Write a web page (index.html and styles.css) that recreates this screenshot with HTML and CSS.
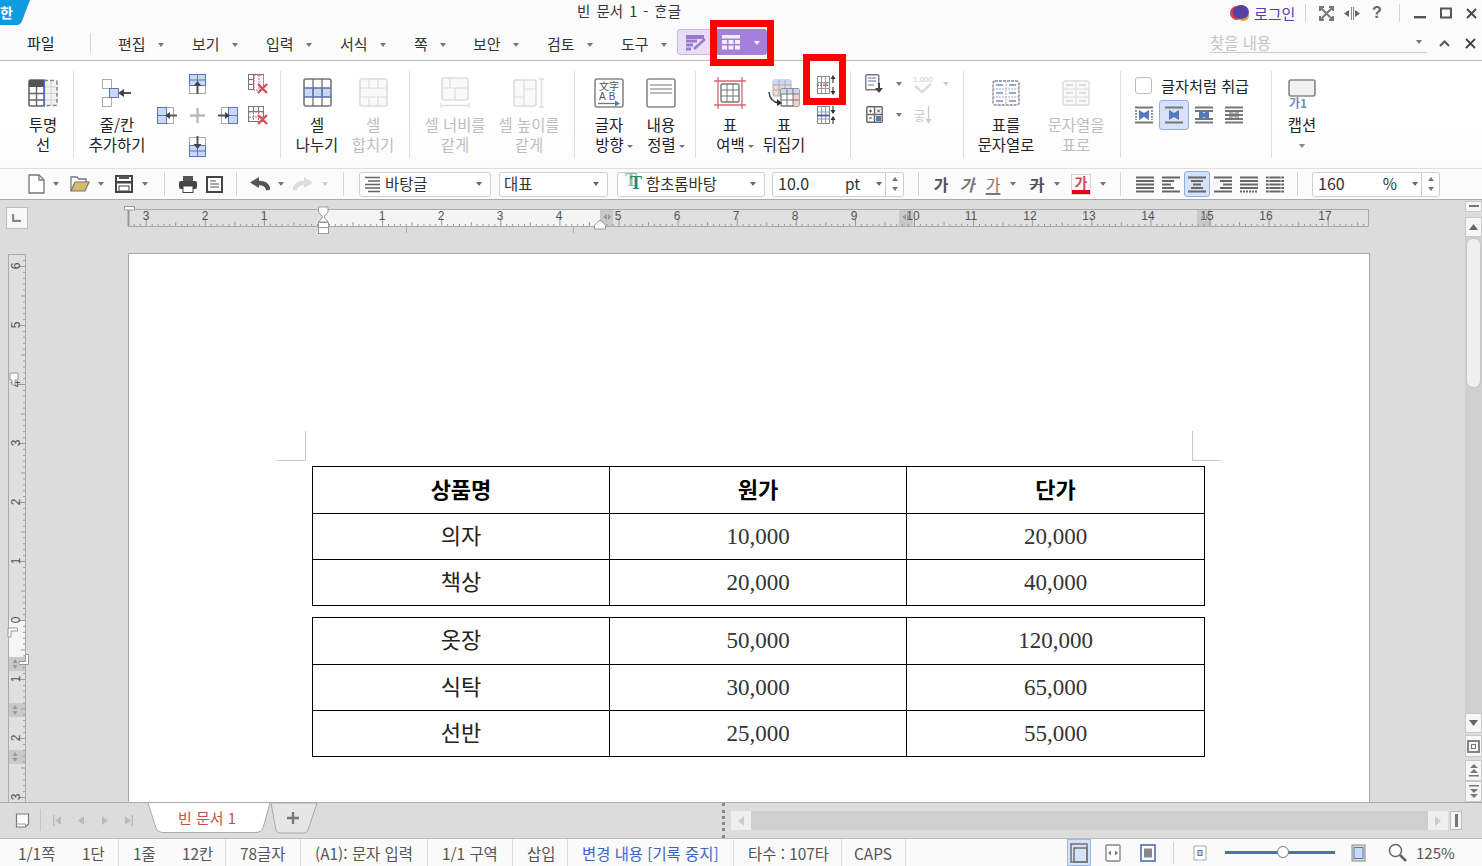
FILE: index.html
```html
<!DOCTYPE html>
<html lang="ko">
<head>
<meta charset="utf-8">
<title>빈 문서 1 - 한글</title>
<link rel="stylesheet" href="styles.css">
</head>
<body>
<div class="app">

<header class="top">
  <div class="titlebar">
    <svg class="logo" width="30" height="25" viewBox="0 0 30 25"><path d="M0 0H30L22 21Q20.500 25 17 25H0Z" fill="#0f9be0"/><text x="0" y="18" font-size="14" font-weight="700" fill="#fff" font-family="Noto Sans CJK KR">한</text></svg>
    <div class="title">빈 문서 1 - ᄒᆞᆫ글</div>
    <div class="winbtns">
      <div class="c w22"><svg width="22" height="18" viewBox="0 0 22 18"><ellipse cx="8" cy="9" rx="7" ry="7" fill="#d8394a"/><ellipse cx="14" cy="12" rx="6" ry="5" fill="#ee9a2e"/><ellipse cx="12" cy="8" rx="8" ry="7" fill="#5540a8"/></svg></div>
      <div class="login w54">로그인</div>
      <div class="vsep short"></div>
      <div class="c w40"><svg width="15" height="15" viewBox="0 0 15 15" fill="none" stroke="#777" stroke-width="2"><path d="M1 5V1H5M10 1H14V5M14 10V14H10M5 14H1V10M2 2L13 13M13 2L2 13"/></svg></div>
      <div class="c w12"><svg width="16" height="13" viewBox="0 0 16 13"><path d="M7.500 0V13M9.500 0V13" stroke="#888"/><path d="M0 6.500L5 3V10ZM16 6.500L11 3V10Z" fill="#666"/></svg></div>
      <div class="c w38 qmark">?</div>
      <div class="c w6"><div class="vsep short"></div></div>
      <div class="c w36"><svg width="12" height="12" viewBox="0 0 12 12"><rect y="9" width="12" height="2.400" fill="#555"/></svg></div>
      <div class="c w16"><svg width="12" height="12" viewBox="0 0 12 12" fill="none" stroke="#555"><rect x="1" y="1.500" width="10" height="9" stroke-width="2"/></svg></div>
      <div class="c w28 closecell"><svg width="11" height="11" viewBox="0 0 11 11" stroke="#444" stroke-width="1.800"><path d="M1 1L10 10M10 1L1 10"/></svg></div>
    </div>
  </div>
  <nav class="menubar">
    <div class="file">파일</div>
    <div class="m w74">편집<i class="dd"></i></div>
    <div class="m w74">보기<i class="dd"></i></div>
    <div class="m w74">입력<i class="dd"></i></div>
    <div class="m w74">서식<i class="dd"></i></div>
    <div class="m w59">쪽<i class="dd"></i></div>
    <div class="m w74">보안<i class="dd"></i></div>
    <div class="m w74">검토<i class="dd"></i></div>
    <div class="m w56">도구<i class="dd"></i></div>
    <div class="ctx">
      <div class="ctx-a"><svg width="22" height="18" viewBox="0 0 22 18"><rect x="1" y="2" width="18" height="4" fill="#9a78cf"/><path d="M1 8H12M1 12H8M1 16H6" stroke="#9a78cf" stroke-width="3"/><path d="M9 16L20 6" stroke="#9a78cf" stroke-width="2.500"/></svg></div>
      <div class="ctx-b"><svg width="18" height="15" viewBox="0 0 18 15"><rect width="18" height="3.500" fill="#f3ecfb"/><g fill="#f3ecfb"><rect y="5" width="5" height="4"/><rect x="6.500" y="5" width="5" height="4"/><rect x="13" y="5" width="5" height="4"/><rect y="10.500" width="5" height="4"/><rect x="6.500" y="10.500" width="5" height="4"/><rect x="13" y="10.500" width="5" height="4"/></g></svg><i class="dd white"></i></div>
    </div>
    <div class="find"><span>찾을 내용</span><i class="dd"></i></div>
    <div class="c w34"><svg width="11" height="7" viewBox="0 0 11 7" fill="none" stroke="#555" stroke-width="2"><path d="M1 6L5.500 1.500L10 6"/></svg></div>
    <div class="c w18"><svg width="11" height="11" viewBox="0 0 11 11" stroke="#444" stroke-width="1.800"><path d="M1 1L10 10M10 1L1 10"/></svg></div>
  </nav>
</header>

<section class="ribbon">
  <div class="grp g1">
    <div class="btn w60"><div class="ic"><svg width="30" height="28" viewBox="0 0 30 28"><rect x="1" y="1" width="15" height="26" rx="1.500" fill="#fff" stroke="#666" stroke-width="1.600"/><rect x="1" y="1" width="15" height="7" fill="#555"/><path d="M8.500 8V27M1 14.500H16M1 21H16" stroke="#666" stroke-width="1.400"/><path d="M16 1.500H27Q29 1.500 29 3.500V24.500Q29 26.500 27 26.500H16" fill="#f4f4f4" stroke="#888" stroke-width="1.600" stroke-dasharray="4 2"/><path d="M23 2V26M17 8H28M17 14.500H28M17 21H28" stroke="#ccc"/><path d="M16.500 0V28" stroke="#5577bb" stroke-width="1.200"/></svg></div><div class="lb">투명<br>선</div></div>
  </div>
  <div class="grp g2">
    <div class="btn w68"><div class="ic"><svg width="30" height="28" viewBox="0 0 30 28"><rect x=".5" y=".5" width="9" height="9" fill="#fff" stroke="#aaa"/><rect x=".5" y="18.500" width="9" height="9" fill="#fff" stroke="#aaa"/><rect x="7.500" y="9.500" width="9" height="9" fill="#c9d8f5" stroke="#5577bb"/><path d="M18 14H29" stroke="#555" stroke-width="2"/><path d="M16 14L22 10V18Z" fill="#444"/></svg></div><div class="lb">줄/칸<br>추가하기</div></div>
    <div class="mini">
      <div class="c w31"></div>
      <div class="c w31"><svg width="18" height="21" viewBox="0 0 18 21"><rect x=".5" y="11.500" width="16" height="8" fill="#fff" stroke="#aaa"/><rect x=".5" y=".5" width="16" height="11" fill="#c9d8f5" stroke="#5577bb"/><path d="M8.500 0V11M0 6H17" stroke="#5577bb"/><path d="M8.500 20V11" stroke="#555" stroke-width="2"/><path d="M8.500 7L12.500 12H4.500Z" fill="#444"/></svg></div>
      <div class="c w30"></div>
      <div class="c w30"><svg width="21" height="21" viewBox="0 0 21 21"><rect x=".5" y=".5" width="15" height="15" fill="#fff" stroke="#777"/><path d="M5.500 1V15M0 5.500H5M0 10.500H5" stroke="#777"/><rect x="6" y="1" width="9.500" height="15" fill="#fff" stroke="#cf5a6a" stroke-dasharray="2 1"/><path d="M11 1V15" stroke="#cf5a6a" stroke-dasharray="2 1"/><path d="M10 10L19 19M19 10L10 19" stroke="#d9505f" stroke-width="2.400"/></svg></div>

      <div class="c w31"><svg width="20" height="17" viewBox="0 0 20 17"><rect x=".5" y=".5" width="16" height="16" fill="#fff" stroke="#aaa"/><rect x=".5" y=".5" width="9" height="16" fill="#c9d8f5" stroke="#5577bb"/><path d="M0 8.500H10" stroke="#5577bb"/><path d="M11 8.500H20" stroke="#555" stroke-width="2"/><path d="M8 8.500L13 5V12Z" fill="#444"/></svg></div>
      <div class="c w31"><svg width="15" height="15" viewBox="0 0 15 15"><path d="M7.500 0V15M0 7.500H15" stroke="#bbb" stroke-width="2.400"/></svg></div>
      <div class="c w30"><svg width="20" height="17" viewBox="0 0 20 17"><rect x="3.500" y=".5" width="16" height="16" fill="#fff" stroke="#aaa"/><rect x="10.500" y=".5" width="9" height="16" fill="#c9d8f5" stroke="#5577bb"/><path d="M10 8.500H20" stroke="#5577bb"/><path d="M0 8.500H9" stroke="#555" stroke-width="2"/><path d="M12 8.500L7 5V12Z" fill="#444"/></svg></div>
      <div class="c w30"><svg width="21" height="20" viewBox="0 0 21 20"><rect x=".5" y=".5" width="15" height="15" fill="#fff" stroke="#777"/><path d="M5.500 0V5M10.500 0V5M0 5.500H15" stroke="#777"/><path d="M1 6H15M1 11H15M5.500 6V15M10.500 6V15" stroke="#cf5a6a" stroke-dasharray="2 1"/><path d="M10 9L19 18M19 9L10 18" stroke="#d9505f" stroke-width="2.400"/></svg></div>

      <div class="c w31"></div>
      <div class="c w31"><svg width="18" height="21" viewBox="0 0 18 21"><rect x=".5" y="1.500" width="16" height="9" fill="#fff" stroke="#aaa"/><rect x=".5" y="9.500" width="16" height="11" fill="#c9d8f5" stroke="#5577bb"/><path d="M8.500 9V21M0 15H17" stroke="#5577bb"/><path d="M8.500 0V9" stroke="#555" stroke-width="2"/><path d="M8.500 13L12.500 8H4.500Z" fill="#444"/></svg></div>
    </div>
  </div>
  <div class="grp g3">
    <div class="btn w56"><div class="ic"><svg width="29" height="29" viewBox="0 0 29 29"><rect x="1" y="10" width="27" height="9" fill="#c9d8f5"/><rect x="1" y="1" width="27" height="27" rx="2" fill="none" stroke="#777" stroke-width="1.600"/><path d="M10 1V28M19 1V28M1 10H28M1 19H28" stroke="#666" stroke-width="1.200"/><path d="M1 10H28M1 19H28M10 10V19M19 10V19" stroke="#5577bb" stroke-width="1.200"/></svg></div><div class="lb">셀<br>나누기</div></div>
    <div class="btn w56 off"><div class="ic"><svg width="29" height="29" viewBox="0 0 29 29"><rect x="1" y="1" width="27" height="27" rx="2" fill="#f9f9f9" stroke="#ddd" stroke-width="1.600"/><path d="M10 1V10M19 1V10M10 19V28M19 19V28M1 10H28M1 19H28" stroke="#ddd" stroke-width="1.200"/></svg></div><div class="lb">셀<br>합치기</div></div>
  </div>
  <div class="grp g4">
    <div class="btn w74 off"><div class="ic"><svg width="30" height="32" viewBox="0 0 30 32"><rect x="2" y="1" width="26" height="22" rx="2" fill="#f9f9f9" stroke="#ddd" stroke-width="1.600"/><path d="M2 11H28M15 11V23M10 1V11" stroke="#ddd" stroke-width="1.200"/><path d="M1 26V31M29 26V31M1 28.500H29" stroke="#ddd" stroke-width="1.400"/></svg></div><div class="lb">셀 너비를<br>같게</div></div>
    <div class="btn w74 off"><div class="ic"><svg width="32" height="30" viewBox="0 0 32 30"><rect x="1" y="2" width="22" height="26" rx="2" fill="#f9f9f9" stroke="#ddd" stroke-width="1.600"/><path d="M11 2V28M1 19H11M11 11H23" stroke="#ddd" stroke-width="1.200"/><path d="M26 1H31M26 29H31M28.500 1V29" stroke="#ddd" stroke-width="1.400"/></svg></div><div class="lb">셀 높이를<br>같게</div></div>
  </div>
  <div class="grp g5">
    <div class="btn w52"><div class="ic"><svg width="30" height="30" viewBox="0 0 30 30"><rect x="1" y="1" width="28" height="28" rx="2" fill="#fff" stroke="#888" stroke-width="1.600"/><text x="5" y="12" font-size="10" fill="#555" font-family="Noto Sans CJK SC">文字</text><text x="5" y="22" font-size="10" fill="#555" font-family="Liberation Sans" letter-spacing="3">AB</text><path d="M4 25.500H24" stroke="#5577bb" stroke-width="1.200"/><path d="M26 25.500L21 22.500V28.500Z" fill="#5577bb"/></svg></div><div class="lb">글자<br>방향<i class="dd hang"></i></div></div>
    <div class="btn w52"><div class="ic"><svg width="30" height="30" viewBox="0 0 30 30"><rect x="1" y="1" width="28" height="28" rx="2" fill="#fff" stroke="#888" stroke-width="1.600"/><path d="M4 7H26M4 11H26M4 15H26" stroke="#777" stroke-width="1.200"/></svg></div><div class="lb">내용<br>정렬<i class="dd hang"></i></div></div>
  </div>
  <div class="grp g6">
    <div class="btn w54"><div class="ic"><svg width="32" height="32" viewBox="0 0 32 32"><path d="M4 0V32M28 0V32M0 4H32M0 28H32" stroke="#cc6b72" stroke-width="1.300"/><rect x="7" y="7" width="18" height="18" rx="1.500" fill="#fff" stroke="#777" stroke-width="1.400"/><path d="M13 7V25M19 7V25M7 13H25M7 19H25" stroke="#777"/></svg></div><div class="lb">표<br>여백<i class="dd hang"></i></div></div>
    <div class="btn w54"><div class="ic"><svg width="32" height="28" viewBox="0 0 32 28"><rect x="5" y="1" width="18" height="16" rx="1" fill="#f1d8d8" stroke="#aaa"/><rect x="5" y="1" width="18" height="5" fill="#c9d8f5"/><path d="M11 1V17M17 1V17M5 6H23M5 11H23" stroke="#aaa"/><rect x="13" y="10" width="18" height="17" rx="1" fill="#fff" stroke="#777" stroke-width="1.300"/><rect x="13" y="10" width="18" height="5" fill="#c9d8f5"/><rect x="25" y="15" width="6" height="12" fill="#f3d2d2"/><path d="M19 10V27M25 10V27M13 15H31M13 21H31" stroke="#777"/><path d="M1 13Q2 23 11 24" fill="none" stroke="#444" stroke-width="1.600"/><path d="M14 24L9 20V27Z" fill="#333"/></svg></div><div class="lb">표<br>뒤집기</div></div>
    <div class="mini-col">
      <div class="c h30"><svg width="19" height="20" viewBox="0 0 19 20"><rect x=".5" y="1.500" width="12" height="17" fill="#fff" stroke="#888"/><path d="M4.500 1V18M8.500 1V18M0 7.500H13M0 13.500H13" stroke="#999"/><path d="M0 10.500H13" stroke="#cf5a6a" stroke-dasharray="2 1"/><path d="M0 9H13" stroke="#cf5a6a" stroke-dasharray="2 1"/><path d="M16 3V8M16 12V17" stroke="#444" stroke-width="1.200"/><path d="M16 0L18.500 4H13.500ZM16 20L13.500 16H18.500Z" fill="#333"/></svg></div>
      <div class="c h30"><svg width="19" height="20" viewBox="0 0 19 20"><rect x=".5" y="1.500" width="12" height="17" fill="#fff" stroke="#888"/><path d="M4.500 1V18M8.500 1V18M0 7H13M0 14H13" stroke="#999"/><path d="M0 10.500H13" stroke="#4a63b5" stroke-width="2"/><path d="M16 1V8M16 12V19" stroke="#444" stroke-width="1.200"/><path d="M16 9L13.500 5H18.500ZM16 11L18.500 15H13.500Z" fill="#333"/></svg></div>
    </div>
  </div>
  <div class="grp g7">
    <div class="g7grid">
      <div class="c w24"><svg width="19" height="20" viewBox="0 0 19 20"><rect x=".8" y=".8" width="13" height="15" rx="1" fill="#fff" stroke="#777" stroke-width="1.400"/><path d="M3 4H11M3 7H11" stroke="#5577bb"/><path d="M3 11H9" stroke="#777"/><path d="M14 9V16" stroke="#444" stroke-width="2"/><path d="M14 19L10 14H18Z" fill="#444"/></svg></div>
      <div class="c w25"><i class="dd"></i></div>
      <div class="c w24"><svg width="22" height="20" viewBox="0 0 22 20" fill="none"><text x="1" y="8" font-size="8" fill="#ccc" font-family="Liberation Sans">1,000</text><path d="M3 12L10 18L19 10" stroke="#ddd" stroke-width="2.400"/></svg></div>
      <div class="c w22"><i class="dd light"></i></div>
      <div class="c w24"><svg width="17" height="17" viewBox="0 0 17 17"><rect x=".8" y=".8" width="15.400" height="15.400" rx="1" fill="#fff" stroke="#666" stroke-width="1.400"/><path d="M8.500 1V16M1 8.500H16" stroke="#666" stroke-width="1.400"/><path d="M3 5H6M4.500 3.500V6.500M11 3.500L14 6.500M14 3.500L11 6.500M3 12H6" stroke="#444"/><rect x="10" y="10" width="5" height="5" fill="#5577bb"/></svg></div>
      <div class="c w25"><i class="dd"></i></div>
      <div class="c w24 sortic"><span>긓</span><svg width="7" height="18" viewBox="0 0 7 18"><path d="M3.500 0V14" stroke="#ccc" stroke-width="1.400"/><path d="M3.500 18L.5 13H6.500Z" fill="#ccc"/></svg></div>
    </div>
  </div>
  <div class="grp g8">
    <div class="btn w70"><div class="ic"><svg width="28" height="26" viewBox="0 0 28 26"><rect x="1" y="1" width="26" height="24" rx="2" fill="#fff" stroke="#888" stroke-width="1.400" stroke-dasharray="3 1"/><path d="M14 1V25M1 9H27M1 17H27" stroke="#aaa" stroke-dasharray="2 1"/><path d="M4 5H11M17 5H24M4 13H11M17 13H24M4 21H11M17 21H24" stroke="#6e8ccc" stroke-width="1.400"/></svg></div><div class="lb">표를<br>문자열로</div></div>
    <div class="btn w70 off"><div class="ic"><svg width="28" height="26" viewBox="0 0 28 26"><rect x="1" y="1" width="26" height="24" rx="2" fill="#f9f9f9" stroke="#ddd" stroke-width="1.400"/><path d="M14 1V25M1 9H27M1 17H27" stroke="#ddd"/><path d="M4 5H11M17 5H24M4 13H11M17 13H24M4 21H11M17 21H24" stroke="#d5d5d5" stroke-width="1.400"/></svg></div><div class="lb">문자열을<br>표로</div></div>
  </div>
  <div class="grp g9">
    <div class="chk"><i class="box"></i><span>글자처럼 취급</span></div>
    <div class="wraps">
      <div class="c w30 h30"><svg width="18" height="18" viewBox="0 0 18 18"><path d="M0 1.500H18M0 16.500H18" stroke="#777" stroke-width="2"/><path d="M1 4V14M17 4V14" stroke="#999" stroke-width="2" stroke-dasharray="2 1"/><path d="M4 4L9 7L14 4V14L9 11L4 14Z" fill="#5577bb"/></svg></div>
      <div class="c w30 h30 on"><svg width="18" height="18" viewBox="0 0 18 18"><path d="M0 1.500H18M0 16.500H18" stroke="#777" stroke-width="2"/><path d="M4 4L9 7L14 4V14L9 11L4 14Z" fill="#5577bb"/></svg></div>
      <div class="c w30 h30"><svg width="18" height="18" viewBox="0 0 18 18"><path d="M0 1.500H18M0 5H18M0 13H18M0 16.500H18" stroke="#777" stroke-width="2"/><path d="M4 4L9 7L14 4V14L9 11L4 14Z" fill="#5577bb"/></svg></div>
      <div class="c w30 h30"><svg width="18" height="18" viewBox="0 0 18 18"><path d="M4 4L9 7L14 4V14L9 11L4 14Z" fill="#aaa"/><path d="M0 1.500H18M0 5H18M0 9H18M0 13H18M0 16.500H18" stroke="#777" stroke-width="1.800"/></svg></div>
    </div>
  </div>
  <div class="grp g10">
    <div class="btn w60"><div class="ic"><svg width="28" height="38" viewBox="0 0 28 38"><rect x="1" y="6" width="26" height="16" rx="2" fill="#f1f1f1" stroke="#888" stroke-width="1.600"/><text x="1" y="34" font-size="12" font-weight="700" fill="#6e8ccc" font-family="Noto Sans CJK KR">가1</text></svg></div><div class="lb">캡션</div><i class="dd below"></i></div>
  </div>
</section>

<section class="toolbar">
  <div class="c w26"></div>
  <div class="c w20"><svg width="17" height="20" viewBox="0 0 17 20" fill="#fff" stroke="#777" stroke-width="1.300"><path d="M1 1H11L16 6V19H1Z"/><path d="M11 1V6H16" fill="none"/></svg></div>
  <div class="c w20"><i class="dd"></i></div>
  <div class="c w28"><svg width="20" height="16" viewBox="0 0 20 16"><path d="M1 15V1H7L9 3H16V6" fill="#fff" stroke="#777" stroke-width="1.300"/><path d="M1 15L5 6H19L15 15Z" fill="#ddb96a" stroke="#777" stroke-width="1.200"/></svg></div>
  <div class="c w14"><i class="dd"></i></div>
  <div class="c w32"><svg width="18" height="18" viewBox="0 0 18 18"><rect x="1" y="1" width="16" height="16" fill="#fff" stroke="#444" stroke-width="2"/><rect x="2" y="6" width="14" height="2.500" fill="#444"/><rect x="4" y="1" width="10" height="3" fill="#555"/><rect x="4" y="11" width="10" height="5" fill="#fff" stroke="#444"/></svg></div>
  <div class="c w10"><i class="dd"></i></div>
  <div class="c w28"><div class="vsep tall"></div></div>
  <div class="c w20"><svg width="18" height="17" viewBox="0 0 18 17"><rect x="4" y="0" width="10" height="5" fill="#555"/><rect x="0" y="5" width="18" height="8" rx="2" fill="#444"/><rect x="4" y="10" width="10" height="6.500" fill="#fff" stroke="#444"/></svg></div>
  <div class="c w32"><svg width="17" height="17" viewBox="0 0 17 17"><rect x="1" y="1" width="15" height="15" fill="#fff" stroke="#444" stroke-width="2"/><path d="M4 5H10M4 8H13M4 11H13" stroke="#555" stroke-width="1.200"/></svg></div>
  <div class="c w12"><div class="vsep tall"></div></div>
  <div class="c w36"><svg width="20" height="14" viewBox="0 0 20 14"><path d="M18.500 13Q17 5 7 6" fill="none" stroke="#555" stroke-width="4.500"/><path d="M0 5.500L9 0V11Z" fill="#555"/></svg></div>
  <div class="c w6"><i class="dd"></i></div>
  <div class="c w38"><svg width="20" height="14" viewBox="0 0 20 14"><path d="M1.500 13Q3 5 13 6" fill="none" stroke="#ddd" stroke-width="4.500"/><path d="M20 5.500L11 0V11Z" fill="#ddd"/></svg></div>
  <div class="c w6"><i class="dd light"></i></div>
  <div class="c w31"><div class="vsep tall"></div></div>
  <div class="combo w132 mr8"><svg width="17" height="17" viewBox="0 0 17 17"><path d="M1 1.500H16M4 5H16M1 8.500H16M1 12H16M4 15.500H16" stroke="#666" stroke-width="1.400"/></svg><span class="ct">바탕글</span><i class="dd end"></i></div>
  <div class="combo w109 mr9"><span>대표</span><i class="dd end"></i></div>
  <div class="combo w148 mr7"><span class="fonticon">T</span><span class="ct">함초롬바탕</span><i class="dd end"></i></div>
  <div class="combo w132"><span class="cnum">10.0</span><span class="unit-pt">pt</span><i class="dd unit-dd"></i><div class="spin"><i class="up"></i><i class="dn"></i></div></div>
  <div class="c w28"><div class="vsep tall"></div></div>
  <div class="c w18 g b">가</div>
  <div class="c w34 g it">가</div>
  <div class="c w18 g ul">가</div>
  <div class="c w22"><i class="dd"></i></div>
  <div class="c w26 g st">가</div>
  <div class="c w14"><i class="dd"></i></div>
  <div class="c w34 col"><span>가</span></div>
  <div class="c w10"><i class="dd"></i></div>
  <div class="c w24"><div class="vsep tall"></div></div>
  <div class="c w26"><svg width="18" height="17" viewBox="0 0 18 17"><path d="M0 1.500H18M0 5H18M0 8.500H18M0 12H18M0 15.500H18" stroke="#666" stroke-width="2"/></svg></div>
  <div class="c w26"><svg width="18" height="17" viewBox="0 0 18 17"><path d="M0 1.500H18M0 5H12M0 8.500H9M0 12H12M0 15.500H18" stroke="#666" stroke-width="2"/></svg></div>
  <div class="c w26 h26 on"><svg width="18" height="17" viewBox="0 0 18 17"><path d="M0 1.500H18M3 5H15M5 8.500H13M3 12H15M0 15.500H18" stroke="#666" stroke-width="2"/></svg></div>
  <div class="c w26"><svg width="18" height="17" viewBox="0 0 18 17"><path d="M0 1.500H18M6 5H18M9 8.500H18M6 12H18M0 15.500H18" stroke="#666" stroke-width="2"/></svg></div>
  <div class="c w26"><svg width="18" height="17" viewBox="0 0 18 17"><path d="M0 1.500H18M0 5H18M0 8.500H18M0 12H18" stroke="#666" stroke-width="2"/><path d="M0 15.500H18" stroke="#666" stroke-width="2" stroke-dasharray="2 1"/></svg></div>
  <div class="c w26"><svg width="18" height="17" viewBox="0 0 18 17"><path d="M0 1.500H18M0 5H18M0 8.500H18M0 12H18M0 15.500H18" stroke="#666" stroke-width="2"/><path d="M3 0V17M15 0V17" stroke="#fff" stroke-width=".6"/></svg></div>
  <div class="c w18"><div class="vsep tall"></div></div>
  <div class="combo w128 ml6"><span class="cnum">160</span><span class="unit-pc">%</span><i class="dd unit-dd2"></i><div class="spin"><i class="up"></i><i class="dn"></i></div></div>
</section>

<main class="work">
  <aside class="leftcol">
    <div class="corner"><svg width="10" height="8" viewBox="0 0 10 8"><path d="M1 0V7H9" fill="none" stroke="#888" stroke-width="2.400"/></svg></div>
    <svg class="vruler" width="26" height="548" viewBox="4 254 26 548">
      <defs><pattern id="vt" width="26" height="59" patternUnits="userSpaceOnUse" patternTransform="translate(4 620)"><path d="M21 .5H14M21 6.400H19M21 12.300H19M21 18.200H19M21 24.100H19M21 30H17M21 35.900H19M21 41.800H19M21 47.700H19M21 53.600H19" stroke="#999" fill="none"/></pattern></defs>
      <rect x="8.500" y="254.500" width="17" height="548" fill="#e0e0e0" stroke="#aaa"/>
      <rect x="9" y="620" width="16" height="37" fill="#f5f5f5"/>
      <rect x="9" y="657" width="16" height="14" fill="#c9c9c9"/><rect x="9" y="703" width="16" height="14" fill="#c9c9c9"/><rect x="9" y="750" width="16" height="14" fill="#c9c9c9"/>
      <rect x="4" y="255" width="21" height="547" fill="url(#vt)"/>
      <g class="rt mid">
        <text transform="translate(20 266) rotate(-90)">6</text><text transform="translate(20 325) rotate(-90)">5</text><text transform="translate(20 384) rotate(-90)">4</text><text transform="translate(20 443) rotate(-90)">3</text><text transform="translate(20 502) rotate(-90)">2</text><text transform="translate(20 561) rotate(-90)">1</text><text transform="translate(20 620) rotate(-90)">0</text><text transform="translate(20 679) rotate(-90)">1</text><text transform="translate(20 738) rotate(-90)">2</text><text transform="translate(20 797) rotate(-90)">3</text>
      </g>
      <path d="M15 659L12.500 663H17.500ZM15 669L12.500 665H17.500ZM15 705L12.500 709H17.500ZM15 715L12.500 711H17.500ZM15 752L12.500 756H17.500ZM15 762L12.500 758H17.500Z" fill="#999"/>
      <path d="M10 373H18V380H15V385H12V380H10Z" fill="#fff" stroke="#999"/>
      <path d="M8 628H17.500V631H11V637H8Z" fill="#fff" stroke="#999"/>
      <path d="M28.500 654.500V664.500H19V661.500H25.500V654.500Z" fill="#fff" stroke="#999"/>
    </svg>
  </aside>
  <div class="center">
    <svg class="hruler" width="1250" height="30" viewBox="122 205 1250 30">
      <defs><pattern id="ht" width="59.1" height="18" patternUnits="userSpaceOnUse" patternTransform="translate(323 209)"><path d="M.5 17V9M6.400 17V15M12.300 17V15M18.200 17V15M24.100 17V15M30 17V13M35.900 17V15M41.800 17V15M47.700 17V15M53.600 17V15" stroke="#999" fill="none"/></pattern></defs>
      <rect x="128.500" y="209.500" width="1240" height="17" fill="#e0e0e0" stroke="#aaa"/>
      <rect x="323" y="210" width="277" height="16" fill="#f5f5f5"/>
      <rect x="600" y="210" width="13" height="16" fill="#c9c9c9"/><rect x="899" y="210" width="14" height="16" fill="#c9c9c9"/><rect x="1197" y="210" width="14" height="16" fill="#c9c9c9"/>
      <rect x="129" y="209" width="1239" height="17" fill="url(#ht)"/>
      <path d="M128.500 209V226" stroke="#999" stroke-width="2"/>
      <g class="rt mid">
        <text x="146" y="220">3</text><text x="205" y="220">2</text><text x="264" y="220">1</text><text x="382" y="220">1</text><text x="441" y="220">2</text><text x="500" y="220">3</text><text x="559" y="220">4</text><text x="618" y="220">5</text><text x="677" y="220">6</text><text x="736" y="220">7</text><text x="795" y="220">8</text><text x="854" y="220">9</text><text x="913" y="220">10</text><text x="971" y="220">11</text><text x="1030" y="220">12</text><text x="1089" y="220">13</text><text x="1148" y="220">14</text><text x="1207" y="220">15</text><text x="1266" y="220">16</text><text x="1325" y="220">17</text>
      </g>
      <path d="M603 217L607 214V220ZM611 217L608 214V220ZM902 217L906 214V220ZM910 217L907 214V220ZM1201 217L1205 214V220ZM1209 217L1206 214V220Z" fill="#999"/>
      <path d="M406.500 227V233M573.500 227V233" stroke="#aaa"/>
      <rect x="124.500" y="206.500" width="10" height="3.500" fill="#fff" stroke="#999"/>
      <path d="M318.500 207H328V212L324 217L328 222H318.500L322.500 217L318.500 212Z" fill="#fff" stroke="#999"/>
      <rect x="318.500" y="222.500" width="10" height="11" fill="#fff" stroke="#999"/>
      <path d="M319 227.500H328" stroke="#999"/>
      <path d="M594.500 229V225L600 220L605.500 225V229Z" fill="#fff" stroke="#999"/>
    </svg>
    <article class="page">
      <div class="crops"><i class="crop cl"></i><i class="crop cr"></i></div>
      <table class="doc first">
        <colgroup><col class="col1"><col class="col2"><col class="col3"></colgroup>
        <tr class="hd"><td>상품명</td><td>원가</td><td>단가</td></tr>
        <tr><td>의자</td><td class="n">10,000</td><td class="n">20,000</td></tr>
        <tr><td>책상</td><td class="n">20,000</td><td class="n">40,000</td></tr>
      </table>
      <table class="doc second">
        <colgroup><col class="col1"><col class="col2"><col class="col3"></colgroup>
        <tr class="tall-row"><td>옷장</td><td class="n">50,000</td><td class="n">120,000</td></tr>
        <tr><td>식탁</td><td class="n">30,000</td><td class="n">65,000</td></tr>
        <tr><td>선반</td><td class="n">25,000</td><td class="n">55,000</td></tr>
      </table>
    </article>
  </div>
  <aside class="vs">
    <div class="sb sb-split"><svg width="10" height="3" viewBox="0 0 10 3"><rect width="10" height="2" fill="#777"/></svg></div>
    <div class="sb sb-up"><svg width="9" height="6" viewBox="0 0 9 6"><path d="M4.500 0L9 6H0Z" fill="#666"/></svg></div>
    <div class="track"><div class="thumb"></div></div>
    <div class="sb sb-dn"><svg width="9" height="6" viewBox="0 0 9 6"><path d="M4.500 6L9 0H0Z" fill="#666"/></svg></div>
    <div class="sb sb-fr"><svg width="13" height="13" viewBox="0 0 13 13"><rect x="1" y="1" width="11" height="11" fill="none" stroke="#777" stroke-width="1.800"/><rect x="4.500" y="4.500" width="4" height="4" fill="none" stroke="#777"/></svg></div>
    <div class="sb sb-pg"><svg width="10" height="13" viewBox="0 0 10 13"><path d="M5 0L9 4H1ZM5 5L9 9H1Z" fill="#777"/><rect y="11" width="10" height="1.500" fill="#777"/></svg></div>
    <div class="sb sb-pg"><svg width="10" height="13" viewBox="0 0 10 13"><rect width="10" height="1.500" fill="#777"/><path d="M5 8L9 4H1ZM5 13L9 9H1Z" fill="#777"/></svg></div>
  </aside>
</main>

<section class="tabbar">
  <div class="c w40 pgic"><svg width="15" height="15" viewBox="0 0 15 15"><path d="M1.500 1H13.500V11L10.500 14H1.500Z" fill="#fff" stroke="#777" stroke-width="1.200"/><path d="M1 11H10.500V14" fill="none" stroke="#999"/></svg></div>
  <div class="vsep tabsep"></div>
  <div class="c w18 navc navl"><svg width="8" height="11" viewBox="0 0 8 11" fill="#bbb"><rect width="1.500" height="11"/><path d="M2 5.500L8 1V10Z"/></svg></div>
  <div class="c w30 navc"><svg width="6" height="11" viewBox="0 0 6 11" fill="#bbb"><path d="M0 5.500L6 1V10Z"/></svg></div>
  <div class="c w18 navc"><svg width="6" height="11" viewBox="0 0 6 11" fill="#bbb"><path d="M6 5.500L0 1V10Z"/></svg></div>
  <div class="c w30 navc"><svg width="8" height="11" viewBox="0 0 8 11" fill="#bbb"><path d="M6 5.500L0 1V10Z"/><rect x="6.500" width="1.500" height="11"/></svg></div>
  <svg class="tabs" width="172" height="32" viewBox="0 0 172 32">
    <path d="M124 0H170L161 27Q159.500 30 157 30H133Q130 30 129 27Z" fill="#e6e6e6" stroke="#aaa"/>
    <path d="M1 0L9 25Q11 29.500 15 29.500H110Q114 29.500 116 25L123 0" fill="#fff" stroke="#aaa"/>
    <text x="60" y="21" class="tabtext">빈 문서 1</text>
    <path d="M146 9V21M140 15H152" stroke="#777" stroke-width="2.400"/>
  </svg>
  <div class="splitter"></div>
  <div class="hs-btn hs-l"><svg width="6" height="10" viewBox="0 0 6 10"><path d="M0 5L6 0V10Z" fill="#ccc"/></svg></div>
  <div class="hs-track"></div>
  <div class="hs-btn hs-r"><svg width="6" height="10" viewBox="0 0 6 10"><path d="M6 5L0 0V10Z" fill="#ccc"/></svg></div>
  <div class="hs-end"><svg width="3" height="13" viewBox="0 0 3 13"><rect width="3" height="13" fill="#777"/></svg></div>
</section>

<footer class="status">
  <div class="st w119"><span class="st-a">1/1쪽</span><span>1단</span></div>
  <div class="st w107"><span class="st-b">1줄</span><span>12칸</span></div>
  <div class="st w75">78글자</div>
  <div class="st w127">(A1): 문자 입력</div>
  <div class="st w85">1/1 구역</div>
  <div class="st w55">삽입</div>
  <div class="st w166 blue">변경 내용 [기록 중지]</div>
  <div class="st w108">타수 : 107타</div>
  <div class="st w64 caps">CAPS</div>
  <div class="c w161"></div>
  <div class="c w24 viewon"><svg width="18" height="20" viewBox="0 0 18 20" fill="none" stroke="#777" stroke-width="1.600"><rect x="1" y="1" width="16" height="18"/><rect x="4" y="5" width="13" height="14"/></svg></div>
  <div class="c w44"><svg width="16" height="18" viewBox="0 0 16 18"><rect x="1" y="1" width="14" height="16" rx="1" fill="#fff" stroke="#888" stroke-width="1.400"/><path d="M3 9L6 6.500V11.500ZM13 9L10 6.500V11.500Z" fill="#777"/></svg></div>
  <div class="c w26"><svg width="16" height="18" viewBox="0 0 16 18"><rect x="1" y="1" width="14" height="16" fill="#fff" stroke="#4f6fb5" stroke-width="1.600"/><rect x="4" y="4.500" width="8" height="9" fill="#888"/></svg></div>
  <div class="c w24"><div class="vsep stsep"></div></div>
  <div class="c w30"><svg width="14" height="16" viewBox="0 0 14 16"><rect x="1" y="1" width="12" height="14" fill="#fff" stroke="#aaa"/><rect x="5" y="5.500" width="4" height="5" fill="#c9d8f5" stroke="#5577bb"/></svg></div>
  <div class="slider"><i class="knob"></i></div>
  <div class="c w46"><svg width="15" height="18" viewBox="0 0 15 18"><rect x="1" y="1" width="13" height="16" fill="#ddd" stroke="#888"/><rect x="3" y="3.500" width="9" height="11" fill="#c9d8f5" stroke="#5577bb"/></svg></div>
  <div class="c w32"><svg width="19" height="19" viewBox="0 0 19 19" fill="none" stroke="#666"><circle cx="7.500" cy="7.500" r="6" stroke-width="1.500" fill="#fff"/><path d="M12 12L18 18" stroke-width="2.600"/></svg></div>
  <div class="zoomval">125%</div>
</footer>

<div class="redbox rb1"></div>
<div class="redbox rb2"></div>
</div>
</body>
</html>
```
FILE: styles.css
```css
*{box-sizing:border-box}
html,body{margin:0;padding:0;height:100%;overflow:hidden}
body{font-family:"Noto Sans CJK KR","Noto Sans",sans-serif;font-size:15px;color:#222;background:#dcdcdc}
.app{position:relative;width:1482px;height:866px;overflow:hidden;display:flex;flex-direction:column}
svg{display:block;flex:none}
i{display:block;font-style:normal}

/* sizing helpers */
.w6{width:6px}.w10{width:10px}.w12{width:12px}.w14{width:14px}.w16{width:16px}.w18{width:18px}.w20{width:20px}.w22{width:22px}.w24{width:24px}.w25{width:25px}.w26{width:26px}.w28{width:28px}.w30{width:30px}.w31{width:31px}.w32{width:32px}.w34{width:34px}.w36{width:36px}.w38{width:38px}.w40{width:40px}.w44{width:44px}.w46{width:46px}.w52{width:52px}.w54{width:54px}.w55{width:55px}.w56{width:56px}.w59{width:59px}.w60{width:60px}.w64{width:64px}.w68{width:68px}.w70{width:70px}.w74{width:74px}.w75{width:75px}.w85{width:85px}.w107{width:107px}.w108{width:108px}.w109{width:109px}.w119{width:119px}.w127{width:127px}.w128{width:128px}.w132{width:132px}.w148{width:148px}.w161{width:161px}.w166{width:166px}
.h26{height:26px}.h30{height:30px}
.mr7{margin-right:7px}.mr8{margin-right:8px}.mr9{margin-right:9px}.ml6{margin-left:6px}
.c{display:flex;align-items:center;justify-content:center;flex:none}

/* dropdown caret */
.dd{width:0;height:0;flex:none;border-left:3.500px solid transparent;border-right:3.500px solid transparent;border-top:4px solid #777}
.dd.white{border-top-color:#fff}
.dd.light{border-top-color:#ccc}
.dd.hang{display:inline-block;margin-left:3px;margin-right:-10px;vertical-align:middle;border-left-width:3px;border-right-width:3px;border-top-width:3px}

/* header */
.top{height:61px;flex:none;background:#fbfbfb;border-bottom:1px solid #bdbdbd}
.titlebar{height:26px;display:flex;align-items:flex-start}
.title{margin-left:547px;font-size:14.500px;word-spacing:2px;line-height:22px;color:#333;white-space:nowrap}
.winbtns{margin-left:auto;display:flex;align-items:center;height:26px;width:253px}
.closecell{justify-content:flex-end;padding-right:5px}
.login{color:#4d3fa6;font-size:15px;padding-left:3px;flex:none}
.vsep{width:1px;background:#d4d4d4;flex:none}
.vsep.short{height:18px}
.vsep.tall{height:24px}
.qmark{font-family:"Liberation Sans",sans-serif;font-weight:700;font-size:16px;color:#666}
.menubar{height:34px;display:flex;align-items:center;padding-left:27px}
.file{width:64px;flex:none;height:20px;line-height:20px;border-right:1px solid #d4d4d4;margin-right:27px}
.m{display:flex;align-items:center;gap:12px;flex:none;white-space:nowrap;color:#333}
.m .dd{margin-top:3px}
.ctx{display:flex;width:90px;height:26px;flex:none;margin-top:-2px}
.ctx-a{width:40px;height:26px;background:#e8def6;border:1px solid #c9b5e8;border-radius:3px 0 0 3px;display:flex;align-items:center;padding-left:7px}
.ctx-b{width:50px;height:26px;background:#a47fdc;border-radius:0 3px 3px 0;display:flex;align-items:center;justify-content:space-between;padding:0 7px 0 5px}
.ctx-b .dd{margin-top:2px}
.find{margin-left:443px;width:217px;height:21px;border-bottom:1px solid #ccc;display:flex;align-items:center;justify-content:space-between;padding-right:5px;color:#c4c4c4;font-size:15.400px;flex:none;margin-top:-2px}

/* ribbon */
.ribbon{height:108px;flex:none;display:flex;align-items:flex-start;padding-top:10px;background:#fff;border-bottom:1px solid #dedede;background-image:linear-gradient(#fff 60%,#fbfbfb)}
.grp{height:87px;flex:none;display:flex;border-right:1px solid #dedede}
.g1{width:74px;padding-left:13px}
.g2{width:207px;padding-left:9px}
.g3{width:129px;padding-left:8px}
.g4{width:165px;padding-left:8px}
.g5{width:121px;padding-left:8px}
.g6{width:155px;padding-left:7px}
.g7{width:113px;padding-left:11px}
.g8{width:157px;padding-left:7px}
.g9{width:151px;padding-left:8px;flex-direction:column}
.g10{border-right:0;width:60px}
.btn{flex:none;display:flex;flex-direction:column;align-items:center}
.ic{height:43px;display:flex;align-items:center;justify-content:center}
.lb{text-align:center;line-height:20px;white-space:nowrap;color:#222;font-size:15.400px}
.btn.off .lb{color:#bdbdbd}
.dd.below{margin-top:10px;border-top-color:#888;border-left-width:3px;border-right-width:3px}
.mini{display:grid;grid-template-columns:31px 31px 30px 30px;grid-auto-rows:31px;margin-top:-2px;flex:none}
.mini-col{width:30px;flex:none;margin-top:-1px}
.g7grid{display:grid;grid-template-columns:24px 25px 24px 22px;grid-auto-rows:31px;margin-top:-3px}
.sortic{gap:0;color:#ccc;font-size:13px;line-height:16px}
.chk{display:flex;align-items:center;height:27px;margin-bottom:2px;padding-left:6px;flex:none;font-size:15.200px}
.box{width:17px;height:17px;border:1px solid #bbb;border-radius:3px;background:#fff;margin-right:9px;margin-top:2px;flex:none}
.wraps{display:flex;height:30px}
.on{background:#d5e2f8;border:1px solid #8fb0e6;border-radius:3px}

/* toolbar */
.toolbar{height:31px;flex:none;display:flex;align-items:center;background:#fbfbfb;border-bottom:1px solid #ababab}
.combo{height:25px;flex:none;display:flex;align-items:center;padding-left:4px;background:#fff;border:1px solid #cfcfcf;border-radius:3px;position:relative;white-space:nowrap;color:#333;font-size:15.400px;line-height:20px}
.combo span{margin-bottom:2px}
.ct{margin-left:4px}
.fonticon{width:20px;font-family:"Liberation Serif",serif;font-size:18px;font-weight:700;color:#1f8a70;text-align:right;text-shadow:-5px -3px 0 #8cc3b3}
.dd.end{margin-left:auto;margin-right:8px;border-top-color:#666}
.cnum{margin-left:1px;font-size:16px}
.unit-pt{margin-left:36px}
.unit-dd{margin-left:16px;border-top-color:#666}
.unit-pc{margin-left:38px}
.unit-dd2{margin-left:15px;border-top-color:#666}
.spin{margin-left:auto;width:18px;height:100%;border-left:1px solid #d0d0d0;display:flex;flex-direction:column;align-items:center;justify-content:center;gap:6px}
.spin .up{width:0;height:0;border-left:3.500px solid transparent;border-right:3.500px solid transparent;border-bottom:4px solid #777}
.spin .dn{width:0;height:0;border-left:3.500px solid transparent;border-right:3.500px solid transparent;border-top:4px solid #777}
.g{font-size:16px;color:#555;font-weight:700;line-height:22px}
.it{font-style:italic;color:#777}
.toolbar .ul{color:#777;font-weight:400;text-decoration:underline;text-decoration-thickness:2px;text-underline-offset:2px}
.toolbar .st{color:#555;text-decoration:line-through}
.col{flex-direction:column}
.col span{display:block;color:#cc4a55;font-size:14px;line-height:15px;font-weight:700;border-bottom:4px solid #e60012;outline:1px solid #d5d5d5;padding:0 3px}

/* workspace */
.work{height:602px;flex:none;display:flex;background:#dcdcdc}
.leftcol{width:128px;flex:none}
.corner{width:22px;height:22px;margin:7px 0 0 6px;background:#f8f8f8;border:1px solid #bdbdbd;display:flex;align-items:center;justify-content:center}
.vruler{margin:25px 0 0 4px}
.center{width:1337px;flex:none}
.hruler{margin:5px 0 0 -6px}
.rt text{font-family:"Liberation Sans",sans-serif;font-size:12px;fill:#555}
.rt.mid text{text-anchor:middle}
.page{width:1242px;height:549px;margin-top:18px;background:#fff;border:1px solid #a8a8a8;border-bottom:0;padding:177px 148px 0 148px;overflow:hidden}
.crops{display:flex;justify-content:space-between}
.crop{width:29px;height:30px;border-bottom:1px solid #c8c8c8}
.cl{border-right:1px solid #c8c8c8}
.cr{border-left:1px solid #c8c8c8}
.doc{border-collapse:collapse;table-layout:fixed;width:892px;margin-left:35px;font-family:"Liberation Serif","Noto Sans CJK KR",serif;font-size:22px;color:#222}
.first{margin-top:5px}
.second{margin-top:11px}
.col1,.col2{width:297px}
.col3{width:298px}
.doc td{border:1px solid #000;text-align:center;height:46px;padding:0;line-height:30px}
.doc .hd td{font-weight:700;height:47px;color:#000;padding-top:1px}
.doc .tall-row td{height:47px}
.doc .n{font-size:23px;color:#333}

/* scrollbar */
.vs{width:17px;flex:none;display:flex;flex-direction:column}
.sb{background:#f6f6f6;border:1px solid #c8c8c8;display:flex;align-items:center;justify-content:center;flex:none}
.sb-split{height:11px;margin:1px 0 5px}
.sb-up{height:20px}
.track{height:476px;flex:none;background:#cfcfcf;padding:1px}
.thumb{height:150px;background:#efefef;border:1px solid #c4c4c4;border-radius:7px}
.sb-dn{height:20px}
.sb-fr{height:22px;margin-top:2px}
.sb-pg{height:21px}
.sb-fr + .sb-pg{margin-top:3px}

/* tabs */
.tabbar{height:36px;flex:none;display:flex;align-items:flex-start;background:#dcdcdc;border-top:1px solid #aaa}
.pgic{height:34px;padding-left:4px}
.tabsep{height:22px;margin-top:6px;background:#c4c4c4}
.navc{height:34px}
.navl{margin-left:7px}
.tabs{margin-left:3px}
.tabtext{font-size:15px;fill:#c8504f;text-anchor:middle}
.splitter{width:3px;height:35px;margin-left:403px;border-left:3px dotted #888;flex:none}
.hs-btn{width:20px;height:19px;margin-top:8px;background:#efefef;flex:none;display:flex;align-items:center;justify-content:center}
.hs-l{margin-left:6px}
.hs-track{width:677px;height:19px;margin-top:8px;background:#cfcfcf;flex:none}
.hs-end{width:12px;height:19px;margin:8px 0 0 2px;background:#f6f6f6;border:1px solid #bbb;display:flex;align-items:center;justify-content:center;flex:none}

/* status */
.status{height:28px;flex:none;display:flex;align-items:center;background:#fafafa;border-top:1px solid #bbb;font-size:15px;color:#555;white-space:nowrap}
.status .st{height:27px;flex:none;display:flex;align-items:center;padding:1px 0 0 14px;border-right:1px solid #dedede;color:#555;font-size:15.400px}
.status .st.w119{padding-left:18px}
.st-a{width:64px;flex:none}
.st-b{width:49px;flex:none}
.status .blue{color:#3c64c8}
.status .caps{padding-left:12px}
.viewon{height:27px;background:#d5e2f8;border:1px solid #9db9e8}
.stsep{height:22px}
.slider{width:110px;height:3px;margin-left:10px;background:#4f6fb5;flex:none;position:relative}
.knob{position:absolute;left:52px;top:-5px;width:12px;height:12px;border-radius:50%;background:#fff;border:1px solid #777}
.zoomval{margin-left:3px;font-size:15px;color:#555}

/* callouts */
.redbox{position:absolute;border:7px solid #fe0000}
.rb1{left:710px;top:20px;width:64px;height:46px}
.rb2{left:803px;top:54px;width:43px;height:51px}
```
